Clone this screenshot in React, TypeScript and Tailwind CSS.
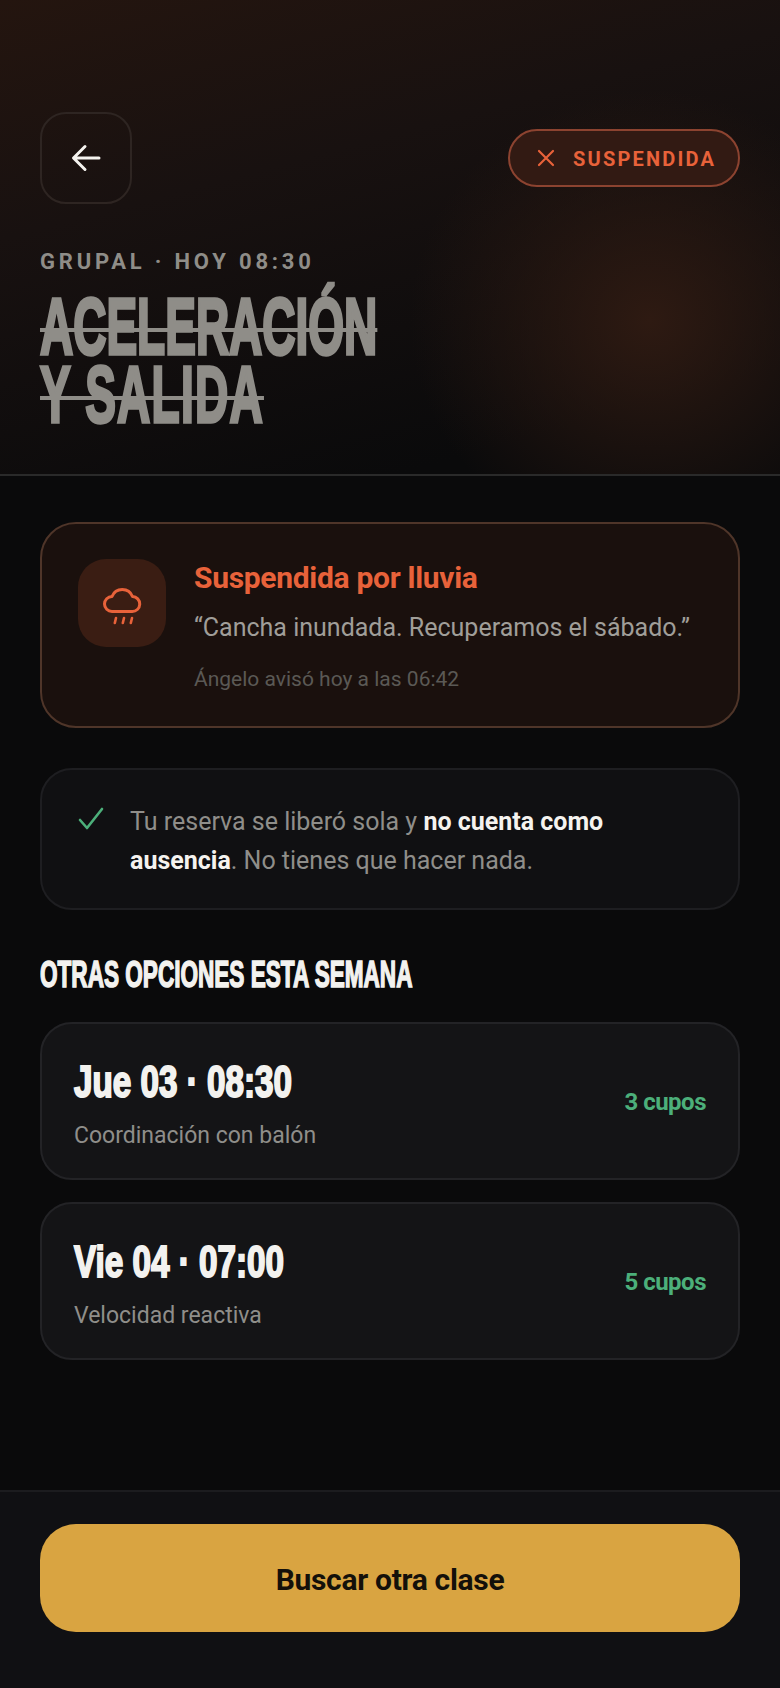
const anton = "font-['Liberation_Sans_Narrow','Liberation_Sans',sans-serif] font-bold";
const body = "font-['Roboto','Liberation_Sans',sans-serif]";

function Rain() {
  return (
    <svg width="44" height="44" viewBox="0 0 44 44" fill="none" stroke="#e8623a" strokeWidth="3" strokeLinecap="round" strokeLinejoin="round">
      <path d="M12 30.5H32a7.5 7.5 0 0 0 .5-15A11 11 0 0 0 12 15.5a7.5 7.5 0 0 0 0 15z" />
      <path d="M16 37l-1.2 5M24 37l-1.2 5M32 37l-1.2 5" strokeWidth="2.6" />
    </svg>
  );
}

function Option({ title, sub, cupos }: { title: string; sub: string; cupos: string }) {
  return (
    <div className="h-[158px] rounded-[32px] border-2 border-[#232326] bg-[#141416] pl-[32px] pr-[32px] flex items-center justify-between">
      <div className="pt-[6px]">
        <div className={`${anton} text-[44px] leading-[52px] text-[#f3f2ef] origin-left scale-x-[0.755] whitespace-nowrap [-webkit-text-stroke:2px_#f3f2ef]`}>{title}</div>
        <div className={`${body} mt-[12px] text-[23px] leading-[32px] text-[#8f8e8a]`}>{sub}</div>
      </div>
      <div className={`${body} mt-[2px] text-[24px] font-bold tracking-[-0.5px] text-[#4caf7a]`}>{cupos}</div>
    </div>
  );
}

export default function App() {
  return (
    <div className="w-[780px] h-[1688px] bg-[#0a0a0b] flex flex-col overflow-hidden">
      <header className="h-[476px] shrink-0 border-b-2 border-[#2a2a2a] px-[40px] pt-[112px] bg-[radial-gradient(ellipse_240px_230px_at_650px_320px,#2e1a12_0%,rgba(46,26,18,0)_100%),linear-gradient(165deg,#24150f_0%,#181110_35%,#0a0a0b_85%)]">
        <div className="flex items-center justify-between">
          <div className="w-[92px] h-[92px] rounded-[26px] border-2 border-[#2e2522] flex items-center justify-center">
            <svg width="32" height="32" viewBox="0 0 32 32" fill="none" stroke="#f5f3ef" strokeWidth="3" strokeLinecap="round" strokeLinejoin="round">
              <path d="M29 16H4M15 4.5L3.5 16 15 27.5" />
            </svg>
          </div>
          <div className="h-[58px] w-[232px] rounded-full border-2 border-[#8c4330] bg-[#321a13] flex items-center pl-[26px] gap-[17px]">
            <svg width="20" height="20" viewBox="0 0 20 20" fill="none" stroke="#e8623a" strokeWidth="2.2" strokeLinecap="round"><path d="M3 3l14 14M17 3L3 17" /></svg>
            <span className={`${body} mt-[2px] text-[20px] font-bold tracking-[2.2px] text-[#e8623a]`}>SUSPENDIDA</span>
          </div>
        </div>
        <div className={`${body} mt-[42px] text-[22px] leading-[32px] font-bold tracking-[3.8px] text-[#8f8d88]`}>GRUPAL · HOY 08:30</div>
        <div className={`${anton} mt-[15px] text-[80px] leading-[68px] text-[#8f8d88] origin-left scale-x-[0.575] whitespace-nowrap line-through decoration-[4px] [-webkit-text-stroke:3.5px_#8f8d88]`}>
          <div>ACELERACIÓN</div>
          <div className="tracking-[2.2px]">Y SALIDA</div>
        </div>
      </header>
      <main className="flex-1 px-[40px] pt-[46px]">
        <section className="h-[206px] rounded-[36px] border-2 border-[#4f3529] bg-[#1a100d] pl-[36px] pt-[36px] flex gap-[28px]">
          <div className="w-[88px] h-[88px] -mt-px rounded-[28px] bg-[#3a1d13] flex items-center justify-center shrink-0"><Rain /></div>
          <div className={body}>
            <div className="text-[30px] leading-[36px] font-bold tracking-[-0.3px] text-[#e8623a]">Suspendida por lluvia</div>
            <div className="mt-[14px] text-[25px] leading-[36px] text-[#a09e99]">“Cancha inundada. Recuperamos el sábado.”</div>
            <div className="mt-[18px] text-[21px] leading-[30px] text-[#5b5955]">Ángelo avisó hoy a las 06:42</div>
          </div>
        </section>
        <section className="mt-[40px] h-[142px] rounded-[32px] border-2 border-[#1e1e21] bg-[#101012] pl-[36px] pt-[32px] flex gap-[26px]">
          <svg className="mt-[4px] shrink-0" width="26" height="26" viewBox="0 0 26 26" fill="none" stroke="#4caf7a" strokeWidth="2.6" strokeLinecap="round" strokeLinejoin="round"><path d="M2 14l7 8L24 3" /></svg>
          <p className={`${body} text-[25px] leading-[39px] text-[#8f8e8a] w-[530px]`}>Tu reserva se liberó sola y <strong className="font-bold text-[#f5f3ef]">no cuenta como ausencia</strong>. No tienes que hacer nada.</p>
        </section>
        <h2 className={`${anton} mt-[42px] text-[37px] leading-[46px] text-[#f3f2ef] origin-left scale-x-[0.61] whitespace-nowrap [-webkit-text-stroke:1.6px_#f3f2ef]`}>OTRAS OPCIONES ESTA SEMANA</h2>
        <div className="mt-[24px] flex flex-col gap-[22px]">
          <Option title="Jue 03 · 08:30" sub="Coordinación con balón" cupos="3 cupos" />
          <Option title="Vie 04 · 07:00" sub="Velocidad reactiva" cupos="5 cupos" />
        </div>
      </main>
      <footer className="h-[198px] shrink-0 border-t-2 border-[#1c1c1f] bg-[#101013] px-[40px] pt-[32px]">
        <button className={`${body} w-full h-[108px] pt-[2px] rounded-[36px] bg-[#d9a441] text-[30px] font-bold tracking-[-0.3px] text-[#14100a]`}>Buscar otra clase</button>
      </footer>
    </div>
  );
}
